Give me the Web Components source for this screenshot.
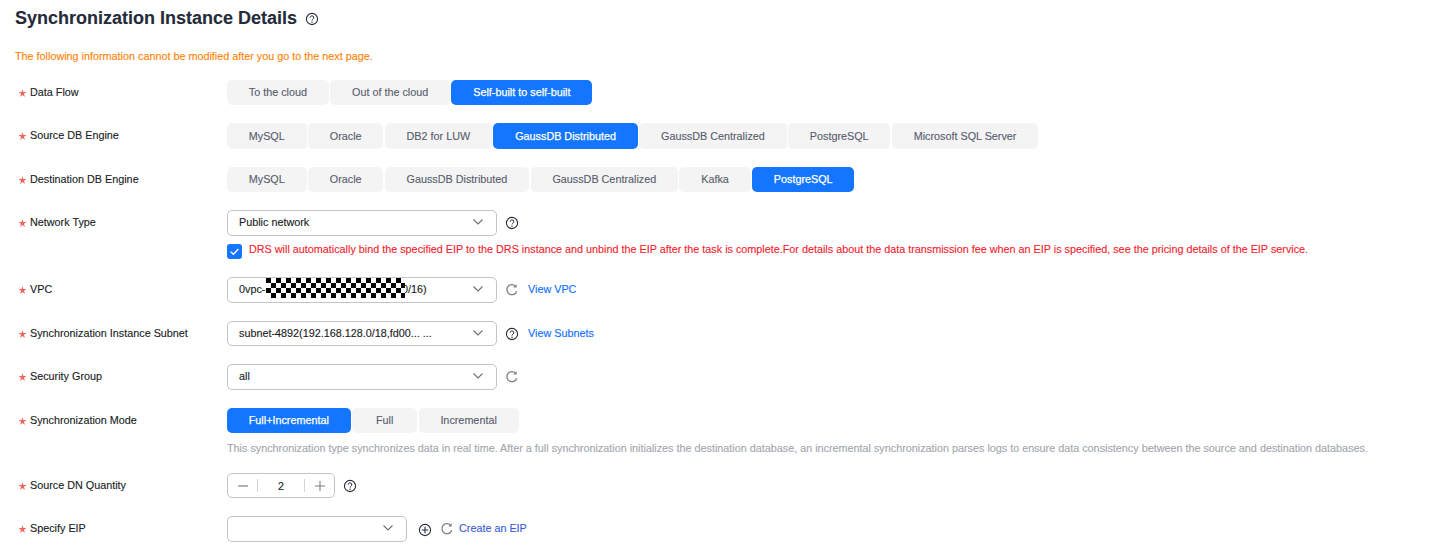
<!DOCTYPE html>
<html>
<head>
<meta charset="utf-8">
<style>
    body { margin: 0; background: #fff; font-family: "Liberation Sans", Arial, sans-serif; font-size: 10.8px; color: #252b3a; -webkit-text-stroke: .12px; }
</style>
</head>
<body>
<sync-details>
    <form-row label="Data Flow">
        <seg-group options="To the cloud|Out of the cloud|Self-built to self-built" active="2"></seg-group>
    </form-row>
    <form-row label="Source DB Engine">
        <seg-group options="MySQL|Oracle|DB2 for LUW|GaussDB Distributed|GaussDB Centralized|PostgreSQL|Microsoft SQL Server" active="3"></seg-group>
    </form-row>
    <form-row label="Destination DB Engine">
        <seg-group options="MySQL|Oracle|GaussDB Distributed|GaussDB Centralized|Kafka|PostgreSQL" active="5"></seg-group>
    </form-row>
    <form-row label="Network Type">
        <drop-select value="Public network"></drop-select>
        <row-icon type="help"></row-icon>
        <check-note slot="below">DRS will automatically bind the specified EIP to the DRS instance and unbind the EIP after the task is complete.For details about the data transmission fee when an EIP is specified, see the pricing details of the EIP service.</check-note>
    </form-row>
    <form-row label="VPC">
        <drop-select value="0vpc-r" masked></drop-select>
        <row-icon type="refresh"></row-icon>
        <row-link>View VPC</row-link>
    </form-row>
    <form-row label="Synchronization Instance Subnet">
        <drop-select value="subnet-4892(192.168.128.0/18,fd00... ..."></drop-select>
        <row-icon type="help"></row-icon>
        <row-link>View Subnets</row-link>
    </form-row>
    <form-row label="Security Group">
        <drop-select value="all"></drop-select>
        <row-icon type="refresh"></row-icon>
    </form-row>
    <form-row label="Synchronization Mode">
        <seg-group options="Full+Incremental|Full|Incremental" active="0"></seg-group>
        <hint-text slot="below">This synchronization type synchronizes data in real time. After a full synchronization initializes the destination database, an incremental synchronization parses logs to ensure data consistency between the source and destination databases.</hint-text>
    </form-row>
    <form-row label="Source DN Quantity">
        <num-stepper value="2"></num-stepper>
        <row-icon type="help"></row-icon>
    </form-row>
    <form-row label="Specify EIP">
        <drop-select value="" short></drop-select>
        <row-icon type="plus" wide></row-icon>
        <row-icon type="refresh" tight></row-icon>
        <row-link dark>Create an EIP</row-link>
    </form-row>
</sync-details>

<script>
class syncDetails extends HTMLElement{
    constructor(){
        super();
        this.attachShadow({mode: 'open'});
        this.shadowRoot.innerHTML = `
            <style>
                :host { display: block; padding: 0 15px; }
                header { display: flex; align-items: center; height: 37px; }
                h1 { margin: 0; font-size: 18px; font-weight: bold; color: #252b3a; line-height: 37px; }
                header row-icon { margin-left: 8px; }
                .note { margin: 13px 0 0; height: 13px; line-height: 13px; color: #ff8205; }
                .rows { display: flex; flex-direction: column; gap: 18px; margin-top: 16.8px; }
            </style>
            <header><h1>Synchronization Instance Details</h1><row-icon type="help"></row-icon></header>
            <p class="note">The following information cannot be modified after you go to the next page.</p>
            <div class="rows"><slot></slot></div>
        `;
    }
}
customElements.define('sync-details',syncDetails);

class formRow extends HTMLElement{
    constructor(){
        super();
        this.attachShadow({mode: 'open'});
        this.shadowRoot.innerHTML = `
            <style>
                :host { display: grid; grid-template-columns: 212px 1fr; }
                .label { display: flex; align-items: center; height: 24px; padding-bottom: 1.5px; color: #191c24; white-space: nowrap; }
                .star { width: 15px; flex: none; padding-top: 2px; }
                .star svg { display: block; margin-left: 2.5px; }
                .main { display: flex; align-items: center; height: 25.5px; }
            </style>
            <div class="label"><span class="star"><svg width="9" height="8" viewBox="0 0 9 8" fill="#f4625f"><path d="M4.5 0 5.3 2.9H8.6L5.9 4.7 7 8 4.5 5.9 2 8 3.1 4.7 .4 2.9H3.7Z"/></svg></span><span class="text"></span></div>
            <div>
                <div class="main"><slot></slot></div>
                <slot name="below"></slot>
            </div>
        `;
    }
    connectedCallback(){
        this.shadowRoot.querySelector('.text').textContent = this.getAttribute('label');
    }
}
customElements.define('form-row',formRow);

class segGroup extends HTMLElement{
    constructor(){
        super();
        this.attachShadow({mode: 'open'});
        this.shadowRoot.innerHTML = `
            <style>
                :host { display: flex; gap: 1.5px; }
                button {
                    height: 25.5px; min-width: 65px; padding: 0 21.75px 1px; border: none; border-radius: 5px;
                    background: #f4f4f5; color: #575d6c; font: inherit; white-space: nowrap;
                }
                button.on { background: #1476ff; color: #fff; -webkit-text-stroke: .25px #fff; }
            </style>
        `;
    }
    connectedCallback(){
        const activo = Number(this.getAttribute('active'));
        this.getAttribute('options').split('|').forEach((texto,i)=>{
            const boton = document.createElement('button');
            boton.textContent = texto;
            if(i===activo){
                boton.className = 'on';
            }
            this.shadowRoot.appendChild(boton);
        });
    }
}
customElements.define('seg-group',segGroup);

class dropSelect extends HTMLElement{
    constructor(){
        super();
        this.attachShadow({mode: 'open'});
        this.shadowRoot.innerHTML = `
            <style>
                :host { display: block; position: relative; width: 270px; height: 25.5px; box-sizing: border-box; border: 1px solid #c2c4c8; border-radius: 5px; }
                :host([short]) { width: 180px; }
                .val { position: absolute; left: 11px; top: 0; line-height: 23px; color: #191c24; white-space: nowrap; }
                svg { position: absolute; right: 13px; top: 8px; }
                .mask {
                    position: absolute; left: 38px; top: 0; width: 139px; height: 20px;
                    background: conic-gradient(#000 25%, #fff 0 50%, #000 0 75%, #fff 0) 5px 0 / 10px 10px;
                }
                .tail { position: absolute; left: 174px; top: 0; line-height: 23px; color: #191c24; }
            </style>
            <span class="val"></span>
            <svg width="10" height="6" viewBox="0 0 10 6" fill="none" stroke="#6a6e77" stroke-width="1.1"><path d="M.5 .5 5 5 9.5 .5"/></svg>
        `;
    }
    connectedCallback(){
        this.shadowRoot.querySelector('.val').textContent = this.getAttribute('value');
        if(this.hasAttribute('masked')){
            const cola = document.createElement('span');
            cola.className = 'tail';
            cola.textContent = '0/16)';
            const mascara = document.createElement('div');
            mascara.className = 'mask';
            this.shadowRoot.append(cola,mascara);
        }
    }
}
customElements.define('drop-select',dropSelect);

class rowIcon extends HTMLElement{
    constructor(){
        super();
        this.attachShadow({mode: 'open'});
        this.shadowRoot.innerHTML = `
            <style>
                :host { display: block; width: 14px; height: 14px; margin-left: 8px; flex: none; }
                :host([wide]) { margin-left: 11px; margin-top: 2px; }
                :host([tight]) { margin-left: 8px; }
                svg { display: block; }
            </style>
        `;
    }
    connectedCallback(){
        const tipo = this.getAttribute('type');
        let dibujo = '';
        if(tipo==='help'){
            dibujo = '<circle cx="7" cy="7" r="5.6" stroke="#252b3a" stroke-width="1.1"/><path d="M5.2 5.7a1.8 1.8 0 1 1 2.7 1.5c-.6.4-.9.7-.9 1.3" stroke="#252b3a" stroke-width="1"/><circle cx="7" cy="10.2" r=".7" fill="#252b3a"/>';
        }
        if(tipo==='refresh'){
            dibujo = '<path d="M11.7 8.2A5 5 0 1 1 10.6 3.3" stroke="#7b7f87" stroke-width="1.3"/><path d="M11.6 1.2v3.4H8.2" fill="#7b7f87"/>';
        }
        if(tipo==='plus'){
            dibujo = '<circle cx="7" cy="7" r="5.6" stroke="#252b3a" stroke-width="1.1"/><path d="M7 3.8v6.4M3.8 7h6.4" stroke="#252b3a" stroke-width="1.1"/>';
        }
        const plantilla = document.createElement('template');
        plantilla.innerHTML = `<svg width="14" height="14" viewBox="0 0 14 14" fill="none">${dibujo}</svg>`;
        this.shadowRoot.appendChild(plantilla.content);
    }
}
customElements.define('row-icon',rowIcon);

class rowLink extends HTMLElement{
    constructor(){
        super();
        this.attachShadow({mode: 'open'});
        this.shadowRoot.innerHTML = `
            <style>
                :host { display: block; margin-left: 9px; padding-bottom: 1.5px; color: #0d6eff; white-space: nowrap; }
                :host([dark]) { margin-left: 5px; color: #3c5bd6; }
            </style>
            <slot></slot>
        `;
    }
}
customElements.define('row-link',rowLink);

class checkNote extends HTMLElement{
    constructor(){
        super();
        this.attachShadow({mode: 'open'});
        this.shadowRoot.innerHTML = `
            <style>
                :host { display: flex; align-items: center; height: 16px; margin-top: 7.5px; gap: 7px; color: #f5222d; white-space: nowrap; }
                .box { width: 15px; height: 15px; border-radius: 3px; background: #1476ff; flex: none; }
                span { padding-bottom: 4px; }
                svg { display: block; }
            </style>
            <div class="box"><svg width="15" height="15" viewBox="0 0 15 15" fill="none" stroke="#fff" stroke-width="1.3"><path d="M3.6 7.6 6.4 10.3 11.4 5"/></svg></div>
            <span><slot></slot></span>
        `;
    }
}
customElements.define('check-note',checkNote);

class hintText extends HTMLElement{
    constructor(){
        super();
        this.attachShadow({mode: 'open'});
        this.shadowRoot.innerHTML = `
            <style>
                :host { display: block; height: 13.5px; margin-top: 8px; line-height: 14px; color: #a3a6ad; white-space: nowrap; }
            </style>
            <slot></slot>
        `;
    }
}
customElements.define('hint-text',hintText);

class numStepper extends HTMLElement{
    constructor(){
        super();
        this.attachShadow({mode: 'open'});
        this.shadowRoot.innerHTML = `
            <style>
                :host { display: flex; align-items: center; width: 108px; height: 25.5px; box-sizing: border-box; border: 1px solid #c2c4c8; border-radius: 5px; }
                .btn { width: 29px; height: 13px; display: flex; align-items: center; justify-content: center; flex: none; }
                .btn.left { border-right: 1px solid #d4d5d8; }
                .btn.right { border-left: 1px solid #d4d5d8; }
                .num { flex: 1; text-align: center; color: #191c24; }
                svg { display: block; }
            </style>
            <div class="btn left"><svg width="12" height="12" viewBox="0 0 12 12" stroke="#7b7f87" stroke-width="1.2"><path d="M1 6h10"/></svg></div>
            <div class="num"></div>
            <div class="btn right"><svg width="12" height="12" viewBox="0 0 12 12" stroke="#7b7f87" stroke-width="1.1"><path d="M1 6h10M6 1v10"/></svg></div>
        `;
    }
    connectedCallback(){
        this.shadowRoot.querySelector('.num').textContent = this.getAttribute('value');
    }
}
customElements.define('num-stepper',numStepper);
</script>
</body>
</html>
